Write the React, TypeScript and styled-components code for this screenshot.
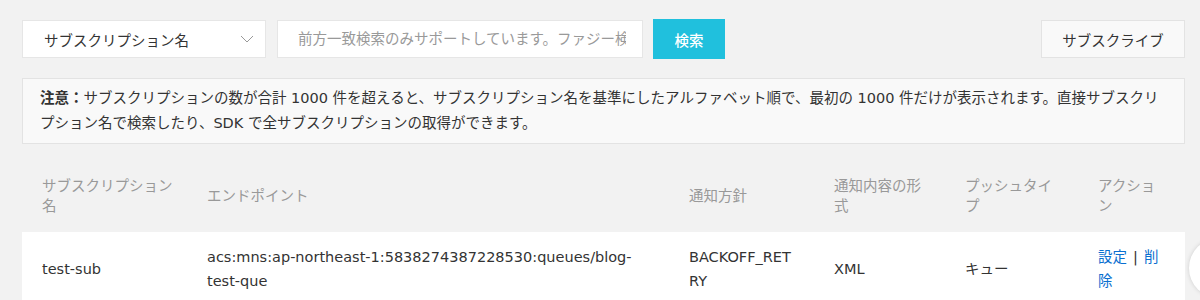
import styled, { createGlobalStyle } from "styled-components";

const GlobalStyle = createGlobalStyle`
  body {
    margin: 0;
    background-color: #f2f2f2;
    font-family: "DejaVu Sans", "Noto Sans CJK JP", sans-serif;
    font-size: 14.5px;
    color: #333;
  }
`;

const Page = styled.div`
  padding: 19px 15px 0 22px;
`;

const Toolbar = styled.div`
  display: flex;
  align-items: center;
  height: 40px;
`;

const Select = styled.div`
  box-sizing: border-box;
  width: 244px;
  height: 38px;
  background-color: #fff;
  border: 1px solid #e6e6e6;
  display: flex;
  align-items: center;
  justify-content: space-between;
  padding: 0 11px 0 21px;
  color: #333;
`;

const SearchInput = styled.input`
  box-sizing: border-box;
  width: 366px;
  height: 38px;
  margin-left: 11px;
  border: 1px solid #e6e6e6;
  background-color: #fff;
  padding: 0 16px 0 20px;
  font-family: inherit;
  font-size: 14.5px;
  outline: none;

  &::placeholder {
    color: #999;
  }
`;

const SearchBtn = styled.button`
  margin-left: 10px;
  width: 72px;
  height: 40px;
  border: none;
  background-color: #20c0dd;
  color: #fff;
  font-family: inherit;
  font-size: 14.5px;
  font-weight: 500;
  cursor: pointer;
`;

const Spacer = styled.div`
  flex: 1;
`;

const SubscribeBtn = styled.button`
  box-sizing: border-box;
  width: 144px;
  height: 38px;
  border: 1px solid #e3e3e3;
  background-color: #f9f9f9;
  color: #333;
  font-family: inherit;
  font-size: 14.5px;
  cursor: pointer;
`;

const Notice = styled.div`
  margin-top: 19px;
  background-color: #f9f9f9;
  border: 1px solid #e3e3e3;
  padding: 7px 17px;
  line-height: 25px;
  color: #333;
`;

const Table = styled.div`
  margin-top: 16px;
`;

const Row = styled.div<{ $head?: boolean }>`
  display: grid;
  grid-template-columns: 165px 482px 145px 131px 133px 1fr;
  align-items: center;
  height: ${(p) => (p.$head ? "72px" : "74px")};
  line-height: ${(p) => (p.$head ? "20px" : "24px")};
  background-color: ${(p) => (p.$head ? "transparent" : "#fff")};
  color: ${(p) => (p.$head ? "#999" : "#333")};
`;

const Cell = styled.div<{ $pr?: number }>`
  padding: 0 ${(p) => p.$pr ?? 14}px 0 20px;
  overflow-wrap: anywhere;
`;

const Link = styled.a`
  color: #0a6fd0;
  text-decoration: none;
  cursor: pointer;
`;

const Sep = styled.span`
  margin: 0 6px;
  color: #333;
`;

const FloatBtn = styled.div`
  position: fixed;
  left: 1189px;
  top: 238px;
  width: 60px;
  height: 60px;
  border-radius: 50%;
  background-color: #fff;
  box-shadow: 0 0 4px rgba(0, 0, 0, 0.15);
`;

const columns = [
  { title: "サブスクリプション名", pr: 10 },
  { title: "エンドポイント", pr: 20 },
  { title: "通知方針", pr: 22 },
  { title: "通知内容の形式", pr: 14 },
  { title: "プッシュタイプ", pr: 18 },
  { title: "アクション", pr: 22 },
];

export default function App() {
  return (
    <>
      <GlobalStyle />
      <Page>
        <Toolbar>
          <Select>
            <span>サブスクリプション名</span>
            <svg width="14" height="8" viewBox="0 0 14 8">
              <polyline points="1,1 7,7 13,1" fill="none" stroke="#999" strokeWidth="1" />
            </svg>
          </Select>
          <SearchInput
            type="text"
            placeholder="前方一致検索のみサポートしています。ファジー検索はサポートしていません。"
          />
          <SearchBtn>検索</SearchBtn>
          <Spacer />
          <SubscribeBtn>サブスクライブ</SubscribeBtn>
        </Toolbar>
        <Notice>
          <b>注意：</b>
          サブスクリプションの数が合計 1000 件を超えると、サブスクリプション名を基準にしたアルファベット順で、最初の 1000 件だけが表示されます。直接サブスクリプション名で検索したり、SDK で全サブスクリプションの取得ができます。
        </Notice>
        <Table>
          <Row $head>
            {columns.map((c) => (
              <Cell key={c.title} $pr={c.pr}>
                {c.title}
              </Cell>
            ))}
          </Row>
          <Row>
            <Cell $pr={columns[0].pr}>test-sub</Cell>
            <Cell $pr={columns[1].pr}>
              acs:mns:ap-northeast-1:5838274387228530:queues/blog-test-que
            </Cell>
            <Cell $pr={columns[2].pr}>BACKOFF_RETRY</Cell>
            <Cell $pr={columns[3].pr}>XML</Cell>
            <Cell $pr={columns[4].pr}>キュー</Cell>
            <Cell $pr={columns[5].pr}>
              <Link>設定</Link>
              <Sep>|</Sep>
              <Link>削除</Link>
            </Cell>
          </Row>
        </Table>
      </Page>
      <FloatBtn />
    </>
  );
}
